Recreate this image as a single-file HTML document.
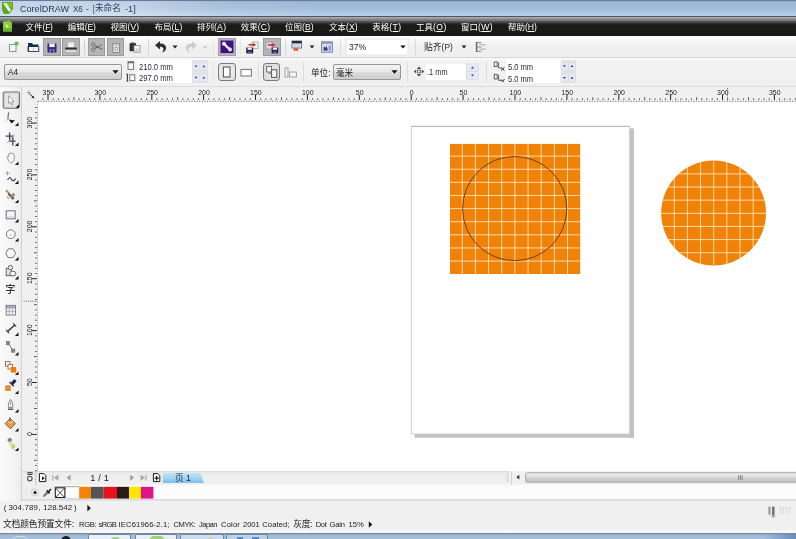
<!DOCTYPE html><html lang="zh"><head><meta charset="utf-8"><title>CorelDRAW X6</title><style>
html,body{margin:0;padding:0;background:#f0f0f0;}
body{will-change:transform;width:796px;height:539px;overflow:hidden;position:relative;font-family:"Liberation Sans","Noto Sans CJK SC",sans-serif;font-size:8px;color:#000;}
.a{position:absolute;}
.t{position:absolute;white-space:nowrap;line-height:1;}
svg{position:absolute;overflow:visible;}
u{text-decoration:underline;text-underline-offset:1px;}
.btn{position:absolute;background:#b4b4b4;border:1px solid #9a9a9a;box-sizing:border-box;}
.fld{position:absolute;background:#fff;box-sizing:border-box;}
.combo{position:absolute;box-sizing:border-box;border:1px solid #979797;border-radius:2px;background:linear-gradient(#f4f4f4,#e9e9e9 45%,#d9d9d9 55%,#cfcfcf);}
.sep{position:absolute;width:1px;background:#d4d4d4;}
</style></head><body>
<div class="a" style="left:0;top:0;width:796px;height:16px;background:linear-gradient(#3c5575 0,#8ba5c4 1px,#9cb6d5 2px,#a1bbd9 8px,#b5cee9 16px);"></div>
<div class="a" style="left:0;top:1px;width:420px;height:15px;background:linear-gradient(to right,rgba(255,255,255,.42) 0,rgba(255,255,255,.38) 130px,rgba(255,255,255,.12) 220px,rgba(255,255,255,0) 330px);"></div>
<div class="a" style="left:0;top:16px;width:796px;height:1px;background:#46566b;"></div>
<div class="t ft" style="left:19.7px;top:3.5px;font-size:9.8px;color:#27405f;letter-spacing:0px;transform-origin:0 0;transform:scaleX(0.925);">CorelDRAW </div>
<div class="t ft" style="left:72.5px;top:3.5px;font-size:9.8px;color:#27405f;letter-spacing:0px;transform-origin:0 0;transform:scaleX(0.818);">X6 </div>
<div class="t ft" style="left:85.9px;top:3.5px;font-size:9.8px;color:#27405f;letter-spacing:0px;transform-origin:0 0;transform:scaleX(0.888);">- </div>
<div class="t ft" style="left:93.0px;top:3.5px;font-size:9.8px;color:#27405f;letter-spacing:0px;transform-origin:0 0;transform:scaleX(0.658);">[ </div>
<div class="t ft" style="left:95.3px;top:3.9px;font-size:8.7px;color:#27405f;letter-spacing:0px;transform-origin:0 0;transform:scaleX(0.986);">未命名 </div>
<div class="t ft" style="left:125.0px;top:3.5px;font-size:9.8px;color:#27405f;letter-spacing:0px;transform-origin:0 0;transform:scaleX(0.936);">-1] </div>
<svg style="left:1px;top:1px" width="14" height="15" viewBox="0 0 14 15">
<path d="M1 1 L12 1 L12 8 L8 13 L3 13 L1 9 Z" fill="#5ea61f"/>
<path d="M2 2 L6 2 L10 9 L8 11 Z" fill="#d9efb4"/>
<path d="M6 2 L11 2 L11 7 Z" fill="#7cc230"/>
<path d="M4 4 L9 10" stroke="#fff" stroke-width="1.2"/>
</svg>
<div class="a" style="left:0;top:17px;width:796px;height:19px;background:linear-gradient(#bcbcbc 0,#9c9c9c 1px,#7d7d7d 3px,#4b4b4b 5px,#222 7px,#1a1a1a 9px,#1a1a1a 100%);"></div>
<svg style="left:2px;top:20px" width="11" height="12.4" viewBox="0 0 11 14" preserveAspectRatio="none">
<path d="M1 2 L7 0.5 L10 3 L10 13 L1 13 Z" fill="#86cc3a"/>
<path d="M3 3 L7 8 L5 10 Z" fill="#dff3bf"/>
<path d="M1 9 L10 9 L10 13 L1 13 Z" fill="#6cb52a"/>
</svg>
<div class="t mn" style="left:25.6px;top:23px;color:#fff;"><span style="font-size:8.5px">文件</span><span class="lat" style="font-size:8.6px;letter-spacing:-0.36px">(<u>F</u>)</span></div>
<div class="t mn" style="left:67.8px;top:23px;color:#fff;"><span style="font-size:8.5px">编辑</span><span class="lat" style="font-size:8.6px;letter-spacing:-0.23px">(<u>E</u>)</span></div>
<div class="t mn" style="left:110.4px;top:23px;color:#fff;"><span style="font-size:8.5px">视图</span><span class="lat" style="font-size:8.6px;letter-spacing:0.17px">(<u>V</u>)</span></div>
<div class="t mn" style="left:154.5px;top:23px;color:#fff;"><span style="font-size:8.5px">布局</span><span class="lat" style="font-size:8.6px;letter-spacing:0.11px">(<u>L</u>)</span></div>
<div class="t mn" style="left:196.9px;top:23px;color:#fff;"><span style="font-size:8.5px">排列</span><span class="lat" style="font-size:8.6px;letter-spacing:0.33px">(<u>A</u>)</span></div>
<div class="t mn" style="left:240.8px;top:23px;color:#fff;"><span style="font-size:8.5px">效果</span><span class="lat" style="font-size:8.6px;letter-spacing:0.17px">(<u>C</u>)</span></div>
<div class="t mn" style="left:284.9px;top:23px;color:#fff;"><span style="font-size:8.5px">位图</span><span class="lat" style="font-size:8.6px;letter-spacing:0.17px">(<u>B</u>)</span></div>
<div class="t mn" style="left:329.0px;top:23px;color:#fff;"><span style="font-size:8.5px">文本</span><span class="lat" style="font-size:8.6px;letter-spacing:0.09px">(<u>X</u>)</span></div>
<div class="t mn" style="left:372.3px;top:23px;color:#fff;"><span style="font-size:8.5px">表格</span><span class="lat" style="font-size:8.6px;letter-spacing:0.40px">(<u>T</u>)</span></div>
<div class="t mn" style="left:416.0px;top:23px;color:#fff;"><span style="font-size:8.5px">工具</span><span class="lat" style="font-size:8.6px;letter-spacing:0.42px">(<u>O</u>)</span></div>
<div class="t mn" style="left:461.0px;top:23px;color:#fff;"><span style="font-size:8.5px">窗口</span><span class="lat" style="font-size:8.6px;letter-spacing:0.41px">(<u>W</u>)</span></div>
<div class="t mn" style="left:508.0px;top:23px;color:#fff;"><span style="font-size:8.5px">帮助</span><span class="lat" style="font-size:8.6px;letter-spacing:-0.11px">(<u>H</u>)</span></div>
<div class="a" style="left:0;top:36px;width:796px;height:21px;background:linear-gradient(#ffffff 0,#fafafa 3px,#f3f3f3 8px,#efefef 12px,#efefef 100%);"></div>
<div class="a" style="left:0;top:57px;width:796px;height:1px;background:#d6d6d6;"></div>
<div class="a" style="left:0;top:58px;width:796px;height:28px;background:linear-gradient(#fbfbfb 0,#f2f2f2 3px,#f0f0f0 100%);"></div>
<div class="a" style="left:0;top:86px;width:796px;height:1px;background:#dcdcdc;"></div>
<svg style="left:8px;top:41px" width="12" height="12" viewBox="0 0 12 12">
<path d="M1.5 3.5 L5 3.5 L8 3.5 L8 10.5 L1.5 10.5 Z" fill="#fdfdfd" stroke="#8a8a8a" stroke-width="1"/>
<path d="M4 3.5 L4 10.5" stroke="#e2e2e2" stroke-width="1"/>
<circle cx="8.6" cy="2.6" r="1.9" fill="#3fae3a"/>
<circle cx="8.6" cy="2.6" r="2.8" fill="#8fdc80" opacity=".35"/>
</svg>
<svg style="left:27px;top:42px" width="13" height="11" viewBox="0 0 13 11">
<path d="M1 1 L5 1 L6 2.4 L11.5 2.4 L11.5 9.5 L1 9.5 Z" fill="#12304f"/>
<path d="M2 5 L11.5 5 L11.5 9 L2 9 Z" fill="#f4f4f4"/>
<path d="M1 4.6 L1 9.5 L11.8 9.5 L11.8 4.6" fill="none" stroke="#3a4a5c" stroke-width="1"/>
<path d="M6.5 5 L6.5 9" stroke="#c8c8c8" stroke-width="1"/>
</svg>
<div class="btn" style="left:43px;top:38px;width:18px;height:18px;"></div>
<svg style="left:47px;top:43px" width="10" height="10" viewBox="0 0 10 10">
<rect x="0.5" y="0.5" width="9" height="9" fill="#2b2a7c"/>
<rect x="2.3" y="0.5" width="5.4" height="3.6" fill="#f2f2ff"/>
<rect x="2.6" y="6" width="4.8" height="3.5" fill="#7d7dc0"/>
<rect x="4.3" y="6.4" width="1.4" height="3.1" fill="#23226a"/>
</svg>
<div class="btn" style="left:62px;top:38px;width:18px;height:18px;"></div>
<svg style="left:64px;top:42px" width="14" height="11" viewBox="0 0 14 11">
<rect x="4.3" y="0.6" width="5.4" height="4.8" fill="#fbfbfb"/>
<path d="M6.5 2.2 L7.8 2.2" stroke="#bbb" stroke-width="1"/>
<rect x="1" y="5.4" width="12" height="2.2" rx="1" fill="#2e2e2e"/>
<rect x="1.6" y="8.2" width="10.8" height="1.6" rx=".8" fill="#e9e9e9"/>
</svg>
<div class="sep" style="left:84px;top:39px;height:16px;background:#d0d0d0;"></div>
<div class="btn" style="left:88px;top:38px;width:17px;height:18px;"></div>
<svg style="left:90px;top:41px" width="14" height="12" viewBox="0 0 14 12">
<circle cx="3.2" cy="3.4" r="1.7" fill="none" stroke="#6f6f6f" stroke-width="1"/>
<circle cx="3.2" cy="8.6" r="1.7" fill="none" stroke="#6f6f6f" stroke-width="1"/>
<path d="M4.6 4.4 L12.5 8.4 M4.6 7.6 L9 5.2 M9.6 4.6 L11.4 3.6" stroke="#6a6a6a" stroke-width="1.1" fill="none"/>
</svg>
<div class="btn" style="left:107px;top:38px;width:17px;height:18px;"></div>
<svg style="left:112px;top:43px" width="9" height="10" viewBox="0 0 9 10">
<rect x="1" y="0.8" width="6.6" height="8.6" fill="#efefef" stroke="#7c7c7c" stroke-width=".9"/>
<rect x="3" y="4.4" width="2.8" height="2.8" fill="none" stroke="#9a9a9a" stroke-width=".8"/>
<path d="M2.6 2.5 L6 2.5" stroke="#aaa" stroke-width=".8"/>
</svg>
<svg style="left:129px;top:42px" width="12" height="11" viewBox="0 0 12 11">
<rect x="0.6" y="1.2" width="6.4" height="8" fill="#2f2f2f"/>
<rect x="2" y="0.4" width="3.4" height="1.6" fill="#555"/>
<rect x="5" y="3.6" width="6" height="6.6" fill="#f6f6f6" stroke="#8a8a8a" stroke-width=".8"/>
<path d="M6.4 7 L9.6 7 M6.4 8.5 L9.6 8.5" stroke="#9ab" stroke-width=".7"/>
</svg>
<div class="sep" style="left:148px;top:39px;height:16px;background:#d6d6d6;"></div>
<svg style="left:154px;top:40px" width="14" height="14" viewBox="0 0 14 14">
<path d="M1 5.2 L6 1 L6 3.6 C10.5 3.4 12.6 6.2 12 9 C11.6 11 9.8 12.2 8 12.4 C9.6 11 10 8.8 8.8 7.6 C8 6.9 7 6.8 6 6.9 L6 9.4 Z" fill="#2f2f2f"/>
</svg>
<svg style="left:172px;top:45px" width="6" height="4" viewBox="0 0 6 4"><path d="M0.5 0.5 L5.5 0.5 L3 3.4 Z" fill="#222"/></svg>
<svg style="left:184px;top:40px" width="14" height="14" viewBox="0 0 14 14">
<path d="M13 5.2 L8 1 L8 3.6 C3.5 3.4 1.4 6.2 2 9 C2.4 11 4.2 12.2 6 12.4 C4.4 11 4 8.8 5.2 7.6 C6 6.9 7 6.8 8 6.9 L8 9.4 Z" fill="#cdcdcd"/>
</svg>
<svg style="left:202px;top:46px" width="6" height="3" viewBox="0 0 6 3"><path d="M0.5 0.5 L5.5 0.5 L3 2.6 Z" fill="#c4c4c4"/></svg>
<div class="sep" style="left:213px;top:39px;height:16px;background:#e9e6dc;"></div>
<div class="a" style="left:218px;top:38px;width:18px;height:18px;box-sizing:border-box;background:#bdb5c6;border:1px solid #a79db4;"></div>
<svg style="left:220px;top:40px" width="14" height="14" viewBox="0 0 14 14">
<rect x="0.5" y="0.5" width="13" height="12.6" fill="#3b1578"/>
<path d="M3.6 3.6 C5.8 4.4 6 6.2 7 7 C8 7.8 9.4 8 10.2 9.6" stroke="#f1ecfb" stroke-width="2.3" fill="none" stroke-linecap="round"/>
<circle cx="4" cy="3.8" r="2" fill="#f6f2fd"/>
<circle cx="10" cy="9.6" r="2" fill="#e9e1f7"/>
</svg>
<div class="sep" style="left:240px;top:39px;height:16px;background:#e9e6dc;"></div>
<svg style="left:245px;top:41px" width="14" height="13" viewBox="0 0 14 13">
<rect x="7" y="1" width="6" height="6.6" fill="#f0f4f2" stroke="#9aa8a4" stroke-width=".8"/>
<rect x="1.2" y="6.6" width="7" height="5.8" fill="#1f2745"/>
<rect x="2.6" y="6.8" width="4.2" height="2" fill="#f4f4f8"/>
<rect x="3" y="10.4" width="3.4" height="2" fill="#59628c"/>
<path d="M3.6 3.8 L9.2 3.8" stroke="#e02418" stroke-width="1.5"/>
<path d="M8.2 1.8 L11 3.8 L8.2 5.8 Z" fill="#e02418"/>
</svg>
<div class="btn" style="left:263px;top:38px;width:18px;height:18px;"></div>
<svg style="left:265px;top:41px" width="14" height="13" viewBox="0 0 14 13">
<rect x="1" y="1" width="6" height="7" fill="#dcdcdc" stroke="#9a9a9a" stroke-width=".8"/>
<rect x="6.6" y="6.6" width="6.6" height="5.8" fill="#1f2560"/>
<rect x="7.8" y="6.8" width="4.2" height="2" fill="#f4f4f8"/>
<rect x="8.4" y="10.4" width="3" height="2" fill="#6870a8"/>
<path d="M3 4 L8.4 4" stroke="#d8202c" stroke-width="1.5"/>
<path d="M7.6 2 L10.4 4 L7.6 6 Z" fill="#d8202c"/>
</svg>
<div class="sep" style="left:285px;top:39px;height:16px;background:#d8d8d8;"></div>
<svg style="left:291px;top:40px" width="12" height="13" viewBox="0 0 12 13">
<rect x="1" y="1" width="9.6" height="7" fill="#fafafa" stroke="#5a6478" stroke-width=".9"/>
<rect x="1" y="1" width="9.6" height="2.4" fill="#1c2a4a"/>
<rect x="3" y="4.6" width="5.6" height="2.2" fill="#e6e6ee" stroke="#a0a0b0" stroke-width=".5"/>
<path d="M2.4 8.4 L7.4 8.4 L6.6 11.6 L4.9 10 L3.2 11.6 Z" fill="#e8402c"/>
</svg>
<svg style="left:309px;top:45px" width="6" height="4" viewBox="0 0 6 4"><path d="M0.5 0.5 L5.5 0.5 L3 3.4 Z" fill="#222"/></svg>
<svg style="left:321px;top:41px" width="12" height="12" viewBox="0 0 12 12">
<rect x="0.6" y="0.8" width="10.8" height="10.4" fill="#d7dcf0" stroke="#7d7fae" stroke-width="1"/>
<rect x="0.6" y="0.8" width="10.8" height="2.2" fill="#9c9cae"/>
<path d="M2.6 9.6 L2.6 6 L4.2 6 L4.2 8 L5.4 5 L6.6 8 L6.6 9.6 Z" fill="#27306a"/>
<rect x="7.6" y="4.6" width="2.2" height="5" fill="#8f96c4"/>
</svg>
<div class="sep" style="left:340px;top:39px;height:16px;background:#dcdcdc;"></div>
<div class="fld" style="left:346px;top:39px;width:62px;height:16px;border:1px solid #f2f2f2;box-shadow:0 0 0 1px #ececec;"></div>
<div class="t" style="left:349px;top:43px;font-size:8.6px;color:#222;">37%</div>
<svg style="left:400px;top:45px" width="6" height="4" viewBox="0 0 6 4"><path d="M0.3 0.4 L5.7 0.4 L3 3.6 Z" fill="#111"/></svg>
<div class="sep" style="left:415px;top:39px;height:16px;background:#d8d8d8;"></div>
<div class="t" style="left:424px;top:43.1px;font-size:8.8px;color:#2a2a2a;"><span>贴齐</span><span style="font-size:8.4px">(P)</span></div>
<svg style="left:461px;top:45px" width="6" height="4" viewBox="0 0 6 4"><path d="M0.5 0.5 L5.5 0.5 L3 3.4 Z" fill="#222"/></svg>
<svg style="left:474px;top:41px" width="13" height="12" viewBox="0 0 13 12">
<path d="M2.6 1 L2.6 11" stroke="#6c6c6c" stroke-width="1.6"/>
<path d="M2.6 1.6 L7.4 1.6 M2.6 6 L7.4 6 M2.6 10.4 L7.4 10.4" stroke="#8a8a8a" stroke-width="1"/>
<path d="M5.4 3.8 L11.6 3.8 M5.4 8.2 L11.6 8.2" stroke="#a8a8a8" stroke-width="1"/>
</svg>
<div class="combo" style="left:4px;top:64px;width:118px;height:16px;"></div>
<div class="t" style="left:8px;top:68.6px;font-size:8.2px;color:#222;">A4</div>
<svg style="left:112px;top:70px" width="7" height="4" viewBox="0 0 7 4"><path d="M0.4 0.3 L6.6 0.3 L3.5 3.8 Z" fill="#111"/></svg>
<svg style="left:126px;top:61px" width="10" height="22" viewBox="0 0 10 22">
<rect x="2" y="1.8" width="5.6" height="6.6" fill="#fafafa" stroke="#6a6a6a" stroke-width=".9"/>
<path d="M1.6 1 L8 1" stroke="#444" stroke-width="1.2"/>
<rect x="3.8" y="13.8" width="5" height="5.8" fill="#fafafa" stroke="#6a6a6a" stroke-width=".9"/>
<path d="M1.4 13 L1.4 20.2" stroke="#444" stroke-width="1.2"/>
<path d="M0.4 13 L2.4 13 M0.4 20.2 L2.4 20.2" stroke="#444" stroke-width=".8"/>
</svg>
<div class="fld" style="left:137px;top:60px;width:56px;height:23px;"></div>
<div class="t ft" style="left:139.0px;top:63.0px;font-size:8.5px;color:#2a2a34;letter-spacing:0px;transform-origin:0 0;transform:scaleX(0.897);">210.0 mm </div>
<div class="t ft" style="left:139.0px;top:74.2px;font-size:8.5px;color:#2a2a34;letter-spacing:0px;transform-origin:0 0;transform:scaleX(0.897);">297.0 mm </div>
<div class="a" style="left:192px;top:60px;width:16px;height:23px;background:#e4e4e4;"></div>
<div class="a" style="left:192.5px;top:63.0px;width:7.0px;height:6.6px;background:#e6e8f5;box-shadow:0 0 0 .5px #d6d9ea;"></div><svg style="left:0;top:0" width="1" height="1"><path d="M194.5 65.4 L197.5 65.4 L196.0 67.4 Z" fill="#3a3f68"/></svg>
<div class="a" style="left:200.3px;top:63.0px;width:7.0px;height:6.6px;background:#e6e8f5;box-shadow:0 0 0 .5px #d6d9ea;"></div><svg style="left:0;top:0" width="1" height="1"><path d="M202.3 67.2 L205.3 67.2 L203.8 65.2 Z" fill="#3a3f68"/></svg>
<div class="a" style="left:192.5px;top:74.4px;width:7.0px;height:6.6px;background:#e6e8f5;box-shadow:0 0 0 .5px #d6d9ea;"></div><svg style="left:0;top:0" width="1" height="1"><path d="M194.5 76.8 L197.5 76.8 L196.0 78.8 Z" fill="#3a3f68"/></svg>
<div class="a" style="left:200.3px;top:74.4px;width:7.0px;height:6.6px;background:#e6e8f5;box-shadow:0 0 0 .5px #d6d9ea;"></div><svg style="left:0;top:0" width="1" height="1"><path d="M202.3 78.6 L205.3 78.6 L203.8 76.6 Z" fill="#3a3f68"/></svg>
<div class="sep" style="left:213px;top:62px;height:20px;background:#e6e6e6;"></div>
<div class="a" style="left:218px;top:63px;width:17.5px;height:17.5px;box-sizing:border-box;border:1.5px solid #7a7a7a;border-radius:3px;background:radial-gradient(#f8f8f8,#dcdcdc);"></div>
<svg style="left:222px;top:66px" width="10" height="12" viewBox="0 0 10 12"><rect x="1.4" y="1" width="6.6" height="10" fill="#fdfdfd" stroke="#555" stroke-width="1.1"/></svg>
<svg style="left:240px;top:68px" width="13" height="10" viewBox="0 0 13 10"><rect x="1" y="1.4" width="10.4" height="6.6" fill="#fdfdfd" stroke="#747474" stroke-width="1"/></svg>
<div class="sep" style="left:258px;top:62px;height:20px;background:#dcdcdc;"></div>
<div class="a" style="left:262.5px;top:63px;width:17.5px;height:17.5px;box-sizing:border-box;border:1.5px solid #7a7a7a;border-radius:3px;background:radial-gradient(#f2f2f2,#d6d6d6);"></div>
<svg style="left:265px;top:65px" width="14" height="14" viewBox="0 0 14 14">
<rect x="1.6" y="1.4" width="5" height="5.6" fill="#f4f4f4" stroke="#666" stroke-width=".9"/>
<rect x="6.6" y="4.8" width="5.2" height="7.6" fill="#fbfbfb" stroke="#555" stroke-width="1"/>
<path d="M4 7 L4 8.6 L6.6 8.6" stroke="#666" stroke-width=".8" fill="none"/>
</svg>
<svg style="left:284px;top:67px" width="14" height="11" viewBox="0 0 14 11">
<rect x="1" y="1" width="3" height="9" fill="#f4f4f4" stroke="#9a9a9a" stroke-width=".9"/>
<rect x="5.4" y="5" width="7" height="5" fill="#f4f4f4" stroke="#9a9a9a" stroke-width=".9"/>
</svg>
<div class="sep" style="left:303px;top:62px;height:20px;background:#dcdcdc;"></div>
<div class="t" style="left:311px;top:68.9px;font-size:8.6px;color:#222;">单位:</div>
<div class="combo" style="left:333px;top:64px;width:67.5px;height:16px;"></div>
<div class="t" style="left:336px;top:68.9px;font-size:8.6px;color:#222;">毫米</div>
<svg style="left:391px;top:70px" width="7" height="4" viewBox="0 0 7 4"><path d="M0.4 0.3 L6.6 0.3 L3.5 3.8 Z" fill="#111"/></svg>
<div class="sep" style="left:407px;top:62px;height:20px;background:#dcdcdc;"></div>
<svg style="left:413px;top:66px" width="12" height="11" viewBox="0 0 12 11">
<path d="M6 0.6 L8.2 3 L3.8 3 Z M6 10.4 L8.2 8 L3.8 8 Z M0.8 5.5 L3.2 3.4 L3.2 7.6 Z M11.2 5.5 L8.8 3.4 L8.8 7.6 Z" fill="#4a4a4a"/>
<rect x="4.6" y="4.2" width="2.8" height="2.6" fill="none" stroke="#555" stroke-width=".8"/>
</svg>
<div class="fld" style="left:425.5px;top:63.5px;width:41px;height:16px;"></div>
<div class="t ft" style="left:427.2px;top:67.6px;font-size:8.5px;color:#2a2a34;letter-spacing:0px;transform-origin:0 0;transform:scaleX(0.872);">.1 mm </div>
<div class="a" style="left:466px;top:63.5px;width:13px;height:16px;background:#e4e4e4;"></div>
<div class="a" style="left:467.0px;top:64.3px;width:11.0px;height:6.6px;background:#e6e8f5;box-shadow:0 0 0 .5px #d6d9ea;"></div><svg style="left:0;top:0" width="1" height="1"><path d="M471.0 68.5 L474.0 68.5 L472.5 66.5 Z" fill="#3a3f68"/></svg>
<div class="a" style="left:467.0px;top:72.2px;width:11.0px;height:6.6px;background:#e6e8f5;box-shadow:0 0 0 .5px #d6d9ea;"></div><svg style="left:0;top:0" width="1" height="1"><path d="M471.0 74.6 L474.0 74.6 L472.5 76.6 Z" fill="#3a3f68"/></svg>
<div class="sep" style="left:486px;top:62px;height:20px;background:#dcdcdc;"></div>
<svg style="left:493px;top:61px" width="13" height="22" viewBox="0 0 13 22">
<rect x="1.2" y="1" width="3" height="4.6" fill="none" stroke="#555" stroke-width=".9"/>
<path d="M5.6 1.4 L5.6 7 L8.4 7" stroke="#555" stroke-width=".9" fill="none"/>
<path d="M8 6.4 L11.4 9.6 M11.4 6.4 L8 9.6" stroke="#333" stroke-width="1"/>
<rect x="1.2" y="13.4" width="3" height="4.6" fill="none" stroke="#555" stroke-width=".9"/>
<path d="M5.6 13.8 L5.6 19.4 L8.4 19.4" stroke="#555" stroke-width=".9" fill="none"/>
<path d="M8 18.4 L9.6 21 L11.4 18" stroke="#333" stroke-width="1" fill="none"/>
</svg>
<div class="fld" style="left:505.5px;top:60px;width:55.5px;height:23px;"></div>
<div class="t ft" style="left:507.6px;top:63.0px;font-size:8.5px;color:#2a2a34;letter-spacing:0px;transform-origin:0 0;transform:scaleX(0.886);">5.0 mm </div>
<div class="t ft" style="left:507.6px;top:74.8px;font-size:8.5px;color:#2a2a34;letter-spacing:0px;transform-origin:0 0;transform:scaleX(0.886);">5.0 mm </div>
<div class="a" style="left:560.5px;top:60px;width:15.5px;height:23px;background:#e4e4e4;"></div>
<div class="a" style="left:561.0px;top:62.6px;width:6.8px;height:7.0px;background:#e6e8f5;box-shadow:0 0 0 .5px #d6d9ea;"></div><svg style="left:0;top:0" width="1" height="1"><path d="M562.9 65.2 L565.9 65.2 L564.4 67.2 Z" fill="#3a3f68"/></svg>
<div class="a" style="left:568.6px;top:62.6px;width:6.8px;height:7.0px;background:#e6e8f5;box-shadow:0 0 0 .5px #d6d9ea;"></div><svg style="left:0;top:0" width="1" height="1"><path d="M570.5 67.0 L573.5 67.0 L572.0 65.0 Z" fill="#3a3f68"/></svg>
<div class="a" style="left:561.0px;top:74.4px;width:6.8px;height:7.0px;background:#e6e8f5;box-shadow:0 0 0 .5px #d6d9ea;"></div><svg style="left:0;top:0" width="1" height="1"><path d="M562.9 77.0 L565.9 77.0 L564.4 79.0 Z" fill="#3a3f68"/></svg>
<div class="a" style="left:568.6px;top:74.4px;width:6.8px;height:7.0px;background:#e6e8f5;box-shadow:0 0 0 .5px #d6d9ea;"></div><svg style="left:0;top:0" width="1" height="1"><path d="M570.5 78.8 L573.5 78.8 L572.0 76.8 Z" fill="#3a3f68"/></svg>
<div class="a" style="left:22px;top:87px;width:774px;height:14px;background:#f0f0f0;"></div>
<div class="a" style="left:22px;top:101px;width:16px;height:370px;background:#f0f0f0;"></div>
<svg style="left:0;top:0" width="796" height="539" viewBox="0 0 796 539" font-family="Liberation Sans, sans-serif" font-size="7.7" fill="#1c1c1c">
<path d="M42.8 98.2V100M53.2 98.2V100M58.3 98.2V100M63.5 98.2V100M68.7 98.2V100M79.1 98.2V100M84.3 98.2V100M89.5 98.2V100M94.7 98.2V100M105.0 98.2V100M110.2 98.2V100M115.4 98.2V100M120.6 98.2V100M131.0 98.2V100M136.2 98.2V100M141.4 98.2V100M146.6 98.2V100M156.9 98.2V100M162.1 98.2V100M167.3 98.2V100M172.5 98.2V100M182.9 98.2V100M188.1 98.2V100M193.3 98.2V100M198.5 98.2V100M208.8 98.2V100M214.0 98.2V100M219.2 98.2V100M224.4 98.2V100M234.8 98.2V100M240.0 98.2V100M245.2 98.2V100M250.3 98.2V100M260.7 98.2V100M265.9 98.2V100M271.1 98.2V100M276.3 98.2V100M286.7 98.2V100M291.9 98.2V100M297.0 98.2V100M302.2 98.2V100M312.6 98.2V100M317.8 98.2V100M323.0 98.2V100M328.2 98.2V100M338.6 98.2V100M343.7 98.2V100M348.9 98.2V100M354.1 98.2V100M364.5 98.2V100M369.7 98.2V100M374.9 98.2V100M380.1 98.2V100M390.4 98.2V100M395.6 98.2V100M400.8 98.2V100M406.0 98.2V100M416.4 98.2V100M421.6 98.2V100M426.8 98.2V100M432.0 98.2V100M442.3 98.2V100M447.5 98.2V100M452.7 98.2V100M457.9 98.2V100M468.3 98.2V100M473.5 98.2V100M478.7 98.2V100M483.8 98.2V100M494.2 98.2V100M499.4 98.2V100M504.6 98.2V100M509.8 98.2V100M520.2 98.2V100M525.4 98.2V100M530.5 98.2V100M535.7 98.2V100M546.1 98.2V100M551.3 98.2V100M556.5 98.2V100M561.7 98.2V100M572.1 98.2V100M577.2 98.2V100M582.4 98.2V100M587.6 98.2V100M598.0 98.2V100M603.2 98.2V100M608.4 98.2V100M613.6 98.2V100M623.9 98.2V100M629.1 98.2V100M634.3 98.2V100M639.5 98.2V100M649.9 98.2V100M655.1 98.2V100M660.3 98.2V100M665.5 98.2V100M675.8 98.2V100M681.0 98.2V100M686.2 98.2V100M691.4 98.2V100M701.8 98.2V100M707.0 98.2V100M712.2 98.2V100M717.4 98.2V100M727.7 98.2V100M732.9 98.2V100M738.1 98.2V100M743.3 98.2V100M753.7 98.2V100M758.9 98.2V100M764.1 98.2V100M769.2 98.2V100M779.6 98.2V100M784.8 98.2V100M790.0 98.2V100M795.2 98.2V100" stroke="#555" stroke-width=".9" fill="none"/>
<path d="M73.9 97.2V100M125.8 97.2V100M177.7 97.2V100M229.6 97.2V100M281.5 97.2V100M333.4 97.2V100M385.3 97.2V100M437.1 97.2V100M489.0 97.2V100M540.9 97.2V100M592.8 97.2V100M644.7 97.2V100M696.6 97.2V100M748.5 97.2V100" stroke="#444" stroke-width=".9" fill="none"/>
<path d="M48.0 95V100M99.9 95V100M151.8 95V100M203.6 95V100M255.5 95V100M307.4 95V100M359.3 95V100M411.2 95V100M463.1 95V100M515.0 95V100M566.9 95V100M618.8 95V100M670.6 95V100M722.5 95V100M774.4 95V100" stroke="#222" stroke-width="1" fill="none"/>
<text x="42.6" y="94.6" textLength="11.6" lengthAdjust="spacingAndGlyphs">350</text>
<text x="94.5" y="94.6" textLength="11.6" lengthAdjust="spacingAndGlyphs">300</text>
<text x="146.4" y="94.6" textLength="11.6" lengthAdjust="spacingAndGlyphs">250</text>
<text x="198.2" y="94.6" textLength="11.6" lengthAdjust="spacingAndGlyphs">200</text>
<text x="250.1" y="94.6" textLength="11.6" lengthAdjust="spacingAndGlyphs">150</text>
<text x="302.0" y="94.6" textLength="11.6" lengthAdjust="spacingAndGlyphs">100</text>
<text x="355.8" y="94.6" textLength="7.7" lengthAdjust="spacingAndGlyphs">50</text>
<text x="409.7" y="94.6" textLength="3.9" lengthAdjust="spacingAndGlyphs">0</text>
<text x="459.6" y="94.6" textLength="7.7" lengthAdjust="spacingAndGlyphs">50</text>
<text x="509.6" y="94.6" textLength="11.6" lengthAdjust="spacingAndGlyphs">100</text>
<text x="561.5" y="94.6" textLength="11.6" lengthAdjust="spacingAndGlyphs">150</text>
<text x="613.4" y="94.6" textLength="11.6" lengthAdjust="spacingAndGlyphs">200</text>
<text x="665.3" y="94.6" textLength="11.6" lengthAdjust="spacingAndGlyphs">250</text>
<text x="717.1" y="94.6" textLength="11.6" lengthAdjust="spacingAndGlyphs">300</text>
<text x="769.0" y="94.6" textLength="11.6" lengthAdjust="spacingAndGlyphs">350</text>
<path d="M38 101.3H796" stroke="#5a5a5a" stroke-width=".9" stroke-dasharray="1 1.6"/>
<path d="M35 470.7H36.8M35 465.5H36.8M35 455.2H36.8M35 450.0H36.8M35 444.8H36.8M35 439.6H36.8M35 429.2H36.8M35 424.0H36.8M35 418.8H36.8M35 413.6H36.8M35 403.3H36.8M35 398.1H36.8M35 392.9H36.8M35 387.7H36.8M35 377.3H36.8M35 372.1H36.8M35 366.9H36.8M35 361.8H36.8M35 351.4H36.8M35 346.2H36.8M35 341.0H36.8M35 335.8H36.8M35 325.4H36.8M35 320.2H36.8M35 315.1H36.8M35 309.9H36.8M35 299.5H36.8M35 294.3H36.8M35 289.1H36.8M35 283.9H36.8M35 273.5H36.8M35 268.4H36.8M35 263.2H36.8M35 258.0H36.8M35 247.6H36.8M35 242.4H36.8M35 237.2H36.8M35 232.0H36.8M35 221.7H36.8M35 216.5H36.8M35 211.3H36.8M35 206.1H36.8M35 195.7H36.8M35 190.5H36.8M35 185.3H36.8M35 180.1H36.8M35 169.8H36.8M35 164.6H36.8M35 159.4H36.8M35 154.2H36.8M35 143.8H36.8M35 138.6H36.8M35 133.4H36.8M35 128.2H36.8M35 117.9H36.8M35 112.7H36.8M35 107.5H36.8" stroke="#555" stroke-width=".9" fill="none"/>
<path d="M34 460.3H36.8M34 408.5H36.8M34 356.6H36.8M34 304.7H36.8M34 252.8H36.8M34 200.9H36.8M34 149.0H36.8" stroke="#444" stroke-width=".9" fill="none"/>
<path d="M31.8 434.4H36.8M31.8 382.5H36.8M31.8 330.6H36.8M31.8 278.7H36.8M31.8 226.8H36.8M31.8 174.9H36.8M31.8 123.1H36.8" stroke="#222" stroke-width="1" fill="none"/>
<text transform="translate(32 435.9) rotate(-90)" textLength="3.9" lengthAdjust="spacingAndGlyphs">0</text>
<text transform="translate(32 386.0) rotate(-90)" textLength="7.7" lengthAdjust="spacingAndGlyphs">50</text>
<text transform="translate(32 336.0) rotate(-90)" textLength="11.6" lengthAdjust="spacingAndGlyphs">100</text>
<text transform="translate(32 284.1) rotate(-90)" textLength="11.6" lengthAdjust="spacingAndGlyphs">150</text>
<text transform="translate(32 232.2) rotate(-90)" textLength="11.6" lengthAdjust="spacingAndGlyphs">200</text>
<text transform="translate(32 180.3) rotate(-90)" textLength="11.6" lengthAdjust="spacingAndGlyphs">250</text>
<text transform="translate(32 128.4) rotate(-90)" textLength="11.6" lengthAdjust="spacingAndGlyphs">300</text>
<path d="M37.9 101.6V471" stroke="#5a5a5a" stroke-width=".9" stroke-dasharray="1 1.6"/>
<path d="M727.5 88V100.6" stroke="#555" stroke-width=".8" stroke-dasharray="1.2 1"/>
<path d="M23.5 301.2H37.4" stroke="#555" stroke-width=".8" stroke-dasharray="1.2 1"/>
<path d="M26.6 92.6H31 M28.8 90.4V94.8" stroke="#666" stroke-width=".8" stroke-dasharray="1 .8"/>
<path d="M29.6 93.6L33.6 97.8" stroke="#333" stroke-width="1"/><path d="M34.4 98.6L31.4 97.6L33.4 95.6Z" fill="#222"/>
</svg>
<div class="a" style="left:0;top:87px;width:21px;height:414px;background:linear-gradient(to right,#fbfbfb,#f4f4f4 60%,#ededed);"></div>
<div class="a" style="left:21px;top:87px;width:1px;height:414px;background:#d2d2d2;"></div>
<svg style="left:0;top:0" width="24" height="539" viewBox="0 0 24 539">
<rect x="3.2" y="92" width="16.2" height="16.2" rx="1.6" fill="#e6e6e6" stroke="#6a6a6a" stroke-width="1.1"/>
<rect x="4.4" y="93.2" width="13.8" height="13.8" rx="1" fill="none" stroke="#c8c8c8" stroke-width=".8"/>
<path d="M8.6 95.6 L8.6 103.6 L10.4 102 L11.8 104.8 L13 104.2 L11.8 101.4 L14 101.2 Z" fill="#fcfcfc" stroke="#8a8a8a" stroke-width=".8"/>
<path d="M19 104.4 L19 107.8 L15.6 107.8 Z" fill="#111"/>
<path d="M8.8 112.4 C8.2 114.6 7.9 117 8 119.4" stroke="#7c7c8c" stroke-width="1.4" fill="none"/>
<path d="M8.8 119.4 L15 120.4 L11.4 123.6 Z" fill="#15151c"/>
<path d="M5.6 121.6 C6.4 120 7.2 119 8 118.4" stroke="#b4b4c8" stroke-width=".8" fill="none"/>
<path d="M18.5 122.4 L18.5 126.0 L14.9 126.0 Z" fill="#111"/>
<path d="M9.6 132.4V141.2H15.6 M5.8 136.2H12.8V145.4" stroke="#45455a" stroke-width="1.3" fill="none"/>
<path d="M7.4 143 L14.4 134.4" stroke="#9a9aa8" stroke-width=".9"/>
<path d="M18.5 142.4 L18.5 146.0 L14.9 146.0 Z" fill="#111"/>
<path d="M7.2 158 C6 155.6 7.4 154.8 8.4 156.2 L8.4 153.4 C8.8 152.2 10 152.4 10.2 153.4 L10.4 152.6 C11 151.6 12 152 12.2 153 L12.6 153 C13.4 152.4 14.2 153 14.2 154 L14.4 159 C14.2 161.6 12.8 163 11 163 C9.2 163 8.2 161 7.2 158 Z" fill="#fafafa" stroke="#7f7f90" stroke-width=".9" transform="translate(1 14.5) scale(.92 .91)"/>
<path d="M18.5 161.4 L18.5 165.0 L14.9 165.0 Z" fill="#111"/>
<path d="M7.5 171V175.4 M5.3 173.2H9.7" stroke="#9a9a9a" stroke-width=".9"/>
<path d="M7.6 180 C9 177 10.4 177.2 11.4 179.2 C12.4 181.2 13.8 181.4 15.6 178.6" stroke="#44444c" stroke-width="1.2" fill="none"/>
<path d="M18.5 180.4 L18.5 184.0 L14.9 184.0 Z" fill="#111"/>
<path d="M6.4 189.6 L9.6 192.4 L8.4 193.8 L5.4 191 Z" fill="#b8814a"/>
<path d="M9 192.6 L14.6 198 L12.8 200 L7.6 194.4 Z" fill="#6b6258"/>
<path d="M10 196 L13.4 192.8 L15.4 195 L12 198 Z" fill="#9a8a78"/>
<path d="M6.6 196.4 L9 198.8" stroke="#c89a5a" stroke-width="1.2"/>
<path d="M18.5 199.4 L18.5 203.0 L14.9 203.0 Z" fill="#111"/>
<rect x="6.2" y="210.8" width="9" height="8" fill="#f4f4fb" stroke="#6f6f78" stroke-width="1"/>
<path d="M6.6 217H14.8" stroke="#c9c9dc" stroke-width="1"/>
<path d="M18.5 218.8 L18.5 222.4 L14.9 222.4 Z" fill="#111"/>
<circle cx="10.8" cy="234.2" r="4.4" fill="#f7f7fc" stroke="#777780" stroke-width="1"/>
<circle cx="10.4" cy="235" r=".7" fill="#aaa"/>
<path d="M18.5 238.0 L18.5 241.6 L14.9 241.6 Z" fill="#111"/>
<path d="M8.2 248.8 L13 248.8 L15.6 253.2 L13 257.6 L8.2 257.6 L5.8 253.2 Z" fill="#f7f7fc" stroke="#777780" stroke-width="1"/>
<path d="M18.5 256.8 L18.5 260.4 L14.9 260.4 Z" fill="#111"/>
<rect x="6.2" y="268.6" width="5" height="7" fill="#e5e5f4" stroke="#55555f" stroke-width=".9"/>
<circle cx="10.4" cy="267.6" r="2.2" fill="#ececf8" stroke="#55555f" stroke-width=".9"/>
<ellipse cx="12.8" cy="273.6" rx="3" ry="2.4" fill="#f6f6fc" stroke="#55555f" stroke-width=".9"/>
<path d="M18.5 275.8 L18.5 279.4 L14.9 279.4 Z" fill="#111"/>
<rect x="6.2" y="305.4" width="9.2" height="9.6" fill="#f8f8fc" stroke="#7c7c88" stroke-width="1"/>
<rect x="6.2" y="305.4" width="9.2" height="2.4" fill="#b9b9d6" stroke="#7c7c88" stroke-width=".8"/>
<path d="M9.3 305.4V315 M12.3 305.4V315 M6.2 311.4H15.4" stroke="#9c9cac" stroke-width=".8"/>
<path d="M7.4 331.6 L14.8 325" stroke="#3c3c44" stroke-width="1.5"/>
<path d="M6 329.8 L9 333.2 M13.2 323.4 L16.2 326.6" stroke="#3c3c44" stroke-width="1.1"/>
<path d="M18.5 332.4 L18.5 336.0 L14.9 336.0 Z" fill="#111"/>
<rect x="6.4" y="341.6" width="3.2" height="3.2" fill="#8a8a90" stroke="#66666c" stroke-width=".6"/>
<rect x="11.6" y="349" width="3.2" height="3.2" fill="#8a8a90" stroke="#66666c" stroke-width=".6"/>
<path d="M9.4 344.8 L12 349" stroke="#8a6a5a" stroke-width="1"/>
<path d="M18.5 352.0 L18.5 355.6 L14.9 355.6 Z" fill="#111"/>
<rect x="5.4" y="361.6" width="4.6" height="4.6" fill="#fff" stroke="#8a6a3a" stroke-width=".9"/>
<rect x="8" y="364.4" width="4.6" height="4.6" fill="#fff" stroke="#a8662a" stroke-width=".9"/>
<rect x="10.8" y="367" width="5.4" height="5.6" fill="#f07a08"/>
<path d="M18.5 371.4 L18.5 375.0 L14.9 375.0 Z" fill="#111"/>
<path d="M10.6 383 L14.4 379 L16.6 381.2 L12.8 385.2 Z" fill="#1d2150"/>
<path d="M9.6 382 L13.8 386.2" stroke="#333a70" stroke-width="1.6"/>
<rect x="5" y="385.4" width="6" height="5.6" fill="#f0a048"/>
<path d="M7 385.4V391 M9 385.4V391" stroke="#c8761c" stroke-width=".9"/>
<path d="M18.5 390.4 L18.5 394.0 L14.9 394.0 Z" fill="#111"/>
<path d="M10.6 399.6 C8.6 402.6 7.8 405 8.6 407.6 L12.6 407.6 C13.4 405 12.6 402.6 10.6 399.6 Z" fill="#f6f6fa" stroke="#70707a" stroke-width=".9"/>
<path d="M8 409.2H13.2" stroke="#44444c" stroke-width="1.3"/>
<path d="M10.6 402V405.6" stroke="#888" stroke-width=".7"/>
<path d="M18.5 409.0 L18.5 412.6 L14.9 412.6 Z" fill="#111"/>
<path d="M5.2 423.6 L10.2 418.6 L15.4 423.6 L10.4 428.8 Z" fill="#f39a3c" stroke="#7a4a1c" stroke-width=".9"/>
<path d="M8 421 L10.4 423.4 L12.8 421" stroke="#fff" stroke-width="1" fill="none"/>
<path d="M9.8 417.4V421" stroke="#55555f" stroke-width="1"/>
<path d="M18.5 428.0 L18.5 431.6 L14.9 431.6 Z" fill="#111"/>
<path d="M7.4 440.4 L10.2 437.8 L12.4 440 L9.6 442.8 Z" fill="#7c6a9c"/>
<path d="M8.4 443 L11 440.8 L15.4 445.6 L12.4 449.4 Z" fill="#eedc88"/>
<path d="M11.4 447.4 L14 444.6 L15.6 446.2 L13.2 449.8 Z" fill="#a6d488"/>
<circle cx="9.2" cy="439.6" r="1.6" fill="#8a80a8"/>
<path d="M18.5 447.4 L18.5 451.0 L14.9 451.0 Z" fill="#111"/>
</svg>
<div class="t" style="left:5.3px;top:285.2px;font-size:10.2px;color:#333;font-weight:500;">字</div>
<div class="a" style="left:38px;top:101.6px;width:758px;height:369.4px;background:#fff;"></div>
<svg style="left:0;top:0" width="796" height="539" viewBox="0 0 796 539">
<rect x="629.6" y="128.4" width="4.4" height="309.4" fill="#c2c2c2"/>
<rect x="414.6" y="434" width="219.4" height="3.8" fill="#c2c2c2"/>
<rect x="411.3" y="126.4" width="218.3" height="307.6" fill="#fff" stroke="#cdcdcd" stroke-width="1"/>
<path d="M411.3 126.4H629.6" stroke="#b8b8b8" stroke-width="1"/>
<rect x="450" y="143.9" width="130.2" height="130.1" fill="#ef8207"/>
<path d="M462.26 143.9V274M450 156.12H580.2M475.42 143.9V274M450 169.24H580.2M488.58 143.9V274M450 182.36H580.2M501.74 143.9V274M450 195.48H580.2M514.90 143.9V274M450 208.60H580.2M528.06 143.9V274M450 221.72H580.2M541.22 143.9V274M450 234.84H580.2M554.38 143.9V274M450 247.96H580.2M567.54 143.9V274M450 261.08H580.2" stroke="#ffe9c4" stroke-width=".85" fill="none"/>
<circle cx="514.7" cy="208.6" r="52.1" fill="none" stroke="#6e400c" stroke-width="1"/>
<defs><clipPath id="cc"><circle cx="713.6" cy="213.0" r="52.4"/></clipPath></defs>
<circle cx="713.6" cy="213.0" r="52.4" fill="#ef8207"/>
<path d="M674.25 160.6V265.4M661.2 173.85H766.0M687.40 160.6V265.4M661.2 187.00H766.0M700.55 160.6V265.4M661.2 200.15H766.0M713.70 160.6V265.4M661.2 213.30H766.0M726.85 160.6V265.4M661.2 226.45H766.0M740.00 160.6V265.4M661.2 239.60H766.0M753.15 160.6V265.4M661.2 252.75H766.0" stroke="#ffe9c4" stroke-width=".85" fill="none" clip-path="url(#cc)"/>
</svg>
<div class="a" style="left:22px;top:471px;width:774px;height:15px;background:#f0f0f0;"></div>
<div class="a" style="left:22px;top:486px;width:774px;height:14px;background:#f6f6f6;"></div>
<div class="a" style="left:22px;top:500px;width:774px;height:1px;background:#e2e2e2;"></div>
<div class="a" style="left:0;top:501px;width:796px;height:32px;background:#f0f0f0;"></div>
<div class="a" style="left:22px;top:471px;width:486px;height:14px;background:linear-gradient(#cfcfcf 0,#e6e6e6 1px,#ececec 3px,#f1f1f1 100%);"></div>
<div class="a" style="left:22px;top:485px;width:774px;height:14px;background:#fcfcfc;"></div>
<div class="a" style="left:22px;top:485px;width:32.4px;height:14px;background:#efefef;"></div>
<div class="a" style="left:508px;top:471px;width:288px;height:14px;background:#f2f2f2;"></div>
<div class="a" style="left:21px;top:471px;width:1px;height:29px;background:#cfcfcf;"></div>
<div class="a" style="left:22px;top:499px;width:774px;height:1px;background:#dadada;"></div>
<svg style="left:0;top:0" width="796" height="539" viewBox="0 0 796 539">
<path d="M27.4 472.6H32.6 M27.4 474.4H32.6" stroke="#555" stroke-width="1.1"/>
<circle cx="29.8" cy="478.6" r="2.3" fill="none" stroke="#555" stroke-width="1.1"/>
<path d="M35.8 471V485" stroke="#8a8a8a" stroke-width=".8" stroke-dasharray="1.4 1.2"/>
<path d="M39.4 473.6 L43.8 473.6 L45.8 475.6 L45.8 481.6 L39.4 481.6 Z" fill="#fdfdfd" stroke="#1a1a1a" stroke-width="1"/>
<path d="M153.4 473.6 L157.8 473.6 L159.8 475.6 L159.8 481.6 L153.4 481.6 Z" fill="#fdfdfd" stroke="#1a1a1a" stroke-width="1"/>
<path d="M42 476.2 L44.8 478.2 L42 480.2 Z" fill="#1a1a1a"/>
<path d="M156.6 476V480.4 M154.6 478.2H158.8" stroke="#1a1a1a" stroke-width="1.2"/>
<path d="M52.8 474.8V480.6" stroke="#a8a8a8" stroke-width="1.1"/><path d="M58.4 474.6 L58.4 480.8 L54 477.7 Z" fill="#a8a8a8"/>
<path d="M70.6 474.6 L70.6 480.8 L66.6 477.7 Z" fill="#a0a0a0"/>
<path d="M130.2 474.6 L130.2 480.8 L134.2 477.7 Z" fill="#a0a0a0"/>
<path d="M146 474.8V480.6" stroke="#a8a8a8" stroke-width="1.1"/><path d="M140.6 474.6 L140.6 480.8 L145 477.7 Z" fill="#a8a8a8"/>
<defs><linearGradient id="tg" x1="0" y1="0" x2="0" y2="1"><stop offset="0" stop-color="#c3e3f7"/><stop offset=".5" stop-color="#a4d4f2"/><stop offset="1" stop-color="#79bee9"/></linearGradient></defs>
<path d="M162.8 473 L198.6 473 C200.4 473.2 201 474.6 201.6 476.2 L204 483 L162.8 483 Z" fill="url(#tg)"/>
<path d="M507 473.4V483 M508.6 473.4V483" stroke="#b4b4b4" stroke-width=".7" stroke-dasharray="1.2 1.2"/>
<path d="M511.6 471.6V485" stroke="#cfcfcf" stroke-width="1"/>
<path d="M519.4 474.8 L519.4 479.6 L516.2 477.2 Z" fill="#3a3a3a"/>
<defs><linearGradient id="sg" x1="0" y1="0" x2="0" y2="1"><stop offset="0" stop-color="#f1f1f1"/><stop offset=".45" stop-color="#dfdfdf"/><stop offset=".55" stop-color="#d0d0d0"/><stop offset="1" stop-color="#c4c4c4"/></linearGradient></defs>
<rect x="525.6" y="472.8" width="280" height="9.4" rx="1.6" fill="url(#sg)" stroke="#9c9c9c" stroke-width=".9"/>
<path d="M738.6 475.2V479.8 M740.4 475.2V479.8 M742.2 475.2V479.8" stroke="#6a6a6a" stroke-width=".8"/>
<circle cx="34.8" cy="492.4" r="3.5" fill="#f0f0f0" stroke="#cfcfcf" stroke-width="1"/>
<circle cx="35" cy="492.6" r="1.5" fill="#111"/>
<path d="M25.4 489V496.4 M27 489V496.4" stroke="#e0e0e0" stroke-width=".7" stroke-dasharray="1 1"/>
<path d="M43 497 L43.4 495 L47.6 490.8 L49.2 492.4 L45 496.6 Z" fill="#7a7a7a"/>
<path d="M46.6 490.4 L49.6 493.4" stroke="#222" stroke-width="1.6"/>
<path d="M47.8 491.4 L50.2 488.6 L51.4 489.8 L48.8 492.4 Z" fill="#1a1a1a"/>
<rect x="55.3" y="487.8" width="9.6" height="9.8" fill="#fff" stroke="#1a1a1a" stroke-width="1.1"/>
<path d="M55.6 488 L64.6 497.4 M64.6 488 L55.6 497.4" stroke="#1a1a1a" stroke-width=".8"/>
<rect x="66.0" y="486.8" width="13.2" height="11.8" fill="#ffffff"/>
<rect x="79.2" y="486.8" width="11.8" height="11.8" fill="#f38205"/>
<rect x="91.0" y="486.8" width="12.7" height="11.8" fill="#545454"/>
<rect x="103.7" y="486.8" width="13.3" height="11.8" fill="#e7121c"/>
<rect x="117.0" y="486.8" width="12.0" height="11.8" fill="#271a19"/>
<rect x="129.0" y="486.8" width="12.0" height="11.8" fill="#ffe600"/>
<rect x="141.0" y="486.8" width="12.4" height="11.8" fill="#e0128c"/>
<path d="M54.6 486.7H79.2" stroke="#777" stroke-width=".7"/>
<path d="M66 498.4H79.2" stroke="#bbb" stroke-width=".6"/>
<path d="M87.4 504.8 L87.4 511.6 L90.8 508.2 Z" fill="#111"/>
<path d="M368.8 521.2 L368.8 527.8 L372.3 524.5 Z" fill="#111"/>
<rect x="768.4" y="506.6" width="2.2" height="8" fill="#9a9a9a"/><rect x="772" y="506.6" width="2.6" height="9" fill="#777"/><path d="M770.6 515.4 L776 515.4 L773.4 518 Z" fill="#aaa"/>
<path d="M780.4 507V514 M783.4 507V514 M786.4 507V514 M789.6 507V513" stroke="#e0e0e0" stroke-width="1.4"/>
<path d="M778 507.4 L792 507.4" stroke="#e8d8d8" stroke-width=".8"/>
</svg>
<div class="t" style="left:90.2px;top:473.8px;font-size:9.2px;color:#222;letter-spacing:.2px;">1 / 1</div>
<div class="t" style="left:175px;top:473.8px;font-size:8.6px;color:#14284a;"><span>页</span> <span style="font-size:8.6px">1</span></div>
<div class="t ft" style="left:3.8px;top:504.0px;font-size:7.9px;color:#222;letter-spacing:-0.44px;">( </div>
<div class="t ft" style="left:8.5px;top:504.0px;font-size:7.9px;color:#222;letter-spacing:0.16px;">304.789, </div>
<div class="t ft" style="left:43.3px;top:504.0px;font-size:7.9px;color:#222;letter-spacing:0.05px;">128.542 </div>
<div class="t ft" style="left:74.1px;top:504.0px;font-size:7.9px;color:#222;letter-spacing:0.16px;">) </div>
<div class="t ft" style="left:3.0px;top:520.2px;font-size:8.7px;color:#1a1a1a;letter-spacing:-0.09px;">文档颜色预置文件: </div>
<div class="t ft" style="left:79.1px;top:521.2px;font-size:7.6px;color:#1a1a1a;letter-spacing:-0.37px;">RGB: </div>
<div class="t ft" style="left:98.6px;top:521.2px;font-size:7.6px;color:#1a1a1a;letter-spacing:-0.67px;">sRGB </div>
<div class="t ft" style="left:118.6px;top:521.2px;font-size:7.6px;color:#1a1a1a;letter-spacing:0.15px;">IEC61966-2.1; </div>
<div class="t ft" style="left:173.6px;top:521.2px;font-size:7.6px;color:#1a1a1a;letter-spacing:-0.51px;">CMYK: </div>
<div class="t ft" style="left:199.1px;top:521.2px;font-size:7.6px;color:#1a1a1a;letter-spacing:-0.60px;">Japan </div>
<div class="t ft" style="left:221.1px;top:521.2px;font-size:7.6px;color:#1a1a1a;letter-spacing:0.13px;">Color </div>
<div class="t ft" style="left:243.1px;top:521.2px;font-size:7.6px;color:#1a1a1a;letter-spacing:-0.10px;">2001 </div>
<div class="t ft" style="left:262.3px;top:521.2px;font-size:7.6px;color:#1a1a1a;letter-spacing:0.08px;">Coated; </div>
<div class="t ft" style="left:293.3px;top:520.2px;font-size:8.7px;color:#1a1a1a;letter-spacing:-0.33px;">灰度: </div>
<div class="t ft" style="left:315.7px;top:521.2px;font-size:7.6px;color:#1a1a1a;letter-spacing:-0.38px;">Dot </div>
<div class="t ft" style="left:329.6px;top:521.2px;font-size:7.6px;color:#1a1a1a;letter-spacing:-0.26px;">Gain </div>
<div class="t ft" style="left:348.4px;top:521.2px;font-size:7.6px;color:#1a1a1a;letter-spacing:0.07px;">15% </div>
<div class="a" style="left:0;top:530.4px;width:796px;height:2.4px;background:linear-gradient(#f4f4f4,#fbfbfb);"></div>
<div class="a" style="left:0;top:532.8px;width:796px;height:7px;background:linear-gradient(#5f758d 0,#8da6c2 1.1px,#a0bad6 2.4px,#a9c3df 7px);"></div>
<div class="a" style="left:11.5px;top:535.8px;width:17px;height:12px;border-radius:9px;background:#a9bfd6;border:1px solid #cfdcea;box-sizing:border-box;"></div>
<div class="a" style="left:60.6px;top:536px;width:10px;height:10px;border-radius:5px;background:#18222e;"></div>
<div class="a" style="left:88.0px;top:533.6px;width:43.4px;height:8px;box-sizing:border-box;border:1px solid #71859b;border-bottom:none;border-radius:2px 2px 0 0;background:linear-gradient(#eef3f8,#dde7f1);"></div>
<div class="a" style="left:135.0px;top:533.6px;width:42.4px;height:8px;box-sizing:border-box;border:1px solid #71859b;border-bottom:none;border-radius:2px 2px 0 0;background:linear-gradient(#eef3f8,#dde7f1);"></div>
<div class="a" style="left:180.3px;top:533.6px;width:43.3px;height:8px;box-sizing:border-box;border:1px solid #71859b;border-bottom:none;border-radius:2px 2px 0 0;background:linear-gradient(#d3e0ee,#c3d4e8);"></div>
<div class="a" style="left:225.5px;top:533.6px;width:42.3px;height:8px;box-sizing:border-box;border:1px solid #71859b;border-bottom:none;border-radius:2px 2px 0 0;background:linear-gradient(#bfd2e8,#b2c9e3);"></div>
<div class="a" style="left:111px;top:537px;width:8.6px;height:4px;background:#a6d096;border-radius:3px 3px 0 0;"></div>
<div class="a" style="left:149px;top:536.4px;width:16px;height:5px;background:#9fd074;border-radius:7px 7px 0 0;"></div>
<div class="a" style="left:209px;top:537px;width:3px;height:3px;background:#e4c9a0;"></div>
<div class="a" style="left:236.5px;top:536.8px;width:6px;height:3px;background:#5c8cd0;"></div><div class="a" style="left:251.6px;top:536.8px;width:7px;height:3px;background:#5c8cd0;"></div>
<div class="a" style="left:764px;top:533.8px;width:32px;height:6px;background:linear-gradient(to right,rgba(90,130,180,0),rgba(84,126,178,.75));"></div>
</body></html>
